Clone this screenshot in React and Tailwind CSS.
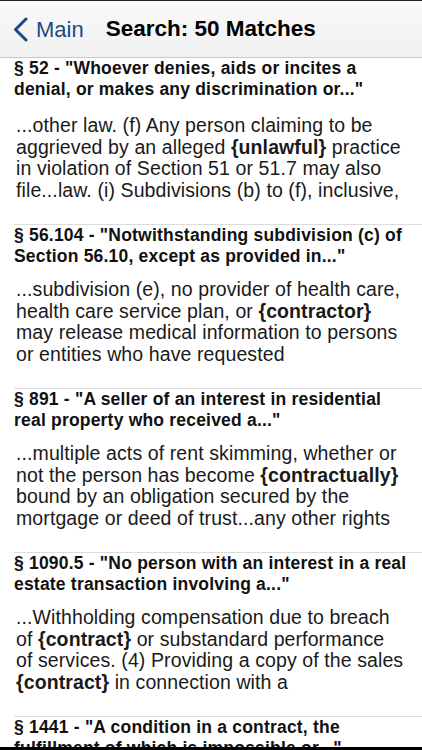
import React from 'react';

const results = [
  {
    title: ['§ 52 - "Whoever denies, aids or incites a', 'denial, or makes any discrimination or..."'],
    body: [
      ['...other law. (f) Any person claiming to be'],
      ['aggrieved by an alleged ', { b: '{unlawful}' }, ' practice'],
      ['in violation of Section 51 or 51.7 may also'],
      ['file...law. (i) Subdivisions (b) to (f), inclusive,'],
    ],
  },
  {
    title: ['§ 56.104 - "Notwithstanding subdivision (c) of', 'Section 56.10, except as provided in..."'],
    body: [
      ['...subdivision (e), no provider of health care,'],
      ['health care service plan, or ', { b: '{contractor}' }],
      ['may release medical information to persons'],
      ['or entities who have requested'],
    ],
  },
  {
    title: ['§ 891 - "A seller of an interest in residential', 'real property who received a..."'],
    body: [
      ['...multiple acts of rent skimming, whether or'],
      ['not the person has become ', { b: '{contractually}' }],
      ['bound by an obligation secured by the'],
      ['mortgage or deed of trust...any other rights'],
    ],
  },
  {
    title: ['§ 1090.5 - "No person with an interest in a real', 'estate transaction involving a..."'],
    body: [
      ['...Withholding compensation due to breach'],
      ['of ', { b: '{contract}' }, ' or substandard performance'],
      ['of services. (4) Providing a copy of the sales'],
      [{ b: '{contract}' }, ' in connection with a'],
    ],
  },
  {
    title: ['§ 1441 - "A condition in a contract, the', 'fulfillment of which is impossible or..."'],
    body: [],
  },
];

function ResultRow({ item, first }) {
  return (
    <div className={first ? '' : 'ml-[14px] border-t border-[#dcdcdc]'}>
      <div className={`${first ? 'pl-[14px]' : ''} text-[17.5px] leading-[21px] font-bold text-[#111] tracking-[0.2px]`}>
        {item.title.map((line, i) => (
          <div key={i} className="whitespace-nowrap">{line}</div>
        ))}
      </div>
      {item.body.length > 0 && (
        <div className={`${first ? 'pl-[16px] mt-[15px]' : 'pl-[2px] mt-[12px]'} pb-[23px] text-[19.5px] leading-[21.5px] tracking-[0.1px] text-[#1a1a1a]`}>
          {item.body.map((line, i) => (
            <div key={i} className="whitespace-nowrap">
              {line.map((part, j) =>
                typeof part === 'string' ? <span key={j}>{part}</span> : <b key={j} className="font-bold">{part.b}</b>
              )}
            </div>
          ))}
        </div>
      )}
    </div>
  );
}

export default function App() {
  return (
    <div className="w-[422px] h-[750px] flex flex-col bg-white overflow-hidden" style={{ fontFamily: '"Liberation Sans", Arial, sans-serif' }}>
      <div className="h-[1px] bg-[#222]" />
      <div className="h-[57px] flex items-center bg-gradient-to-b from-[#f9f9f9] to-[#f1f1f1] border-b border-[#c8c8c8]">
        <div className="flex items-center pl-[12px] text-[#1c4b82]">
          <svg width="17" height="25" viewBox="0 0 17 25" fill="none">
            <path d="M14 2 L3.5 12.5 L14 23" stroke="currentColor" strokeWidth="3" strokeLinecap="round" strokeLinejoin="round" />
          </svg>
          <span className="ml-[7px] text-[22px]">Main</span>
        </div>
        <span className="ml-[22px] text-[22.5px] font-semibold text-black">Search: 50 Matches</span>
      </div>
      <div className="flex-1 overflow-hidden">
        {results.map((item, i) => (
          <ResultRow key={i} item={item} first={i === 0} />
        ))}
      </div>
      <div className="h-[3px] bg-black" />
    </div>
  );
}
